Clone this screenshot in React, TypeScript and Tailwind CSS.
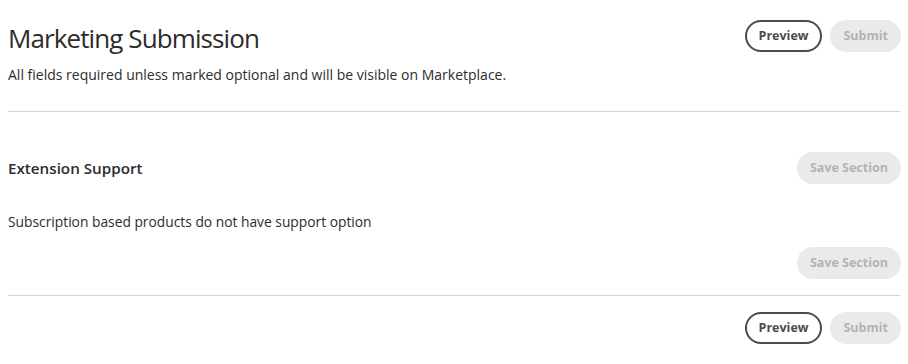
const font = { fontFamily: '"Open Sans", "Noto Sans", sans-serif' }

function OutlineButton({ label }: { label: string }) {
  return (
    <button className="h-8 rounded-full border-2 border-[#4b4b4b] px-[12px] text-[12.5px] font-bold text-[#4b4b4b]">
      {label}
    </button>
  )
}

function DisabledButton({ label }: { label: string }) {
  return (
    <button
      disabled
      className="h-8 rounded-full bg-[#eaeaea] px-[13px] text-[12.5px] font-bold text-[#b3b3b3]"
    >
      {label}
    </button>
  )
}

export default function App() {
  return (
    <div className="min-h-screen bg-white pl-2 pr-[7px] text-[#4b4b4b]" style={font}>
      <div className="flex items-start justify-between pt-5">
        <div>
          <h1 className="text-[26px] leading-9 tracking-[-0.9px] text-[#2c2c2c]">Marketing Submission</h1>
          <p className="mt-[9px] text-[14px] leading-5 text-[#2c2c2c]">
            All fields required unless marked optional and will be visible on Marketplace.
          </p>
        </div>
        <div className="flex gap-[8px]">
          <OutlineButton label="Preview" />
          <DisabledButton label="Submit" />
        </div>
      </div>

      <div className="mr-px mt-[26px] h-px bg-[#d3d3d3]" />

      <div className="mt-10 flex items-center justify-between">
        <h2 className="text-[15.2px] font-semibold text-[#2c2c2c]">Extension Support</h2>
        <DisabledButton label="Save Section" />
      </div>

      <p className="mt-[28px] text-[13.8px] leading-5 text-[#2c2c2c]">
        Subscription based products do not have support option
      </p>

      <div className="mt-[15px] flex justify-end">
        <DisabledButton label="Save Section" />
      </div>

      <div className="mr-px mt-4 h-px bg-[#d3d3d3]" />

      <div className="mt-4 flex justify-end gap-[8px]">
        <OutlineButton label="Preview" />
        <DisabledButton label="Submit" />
      </div>
    </div>
  )
}
